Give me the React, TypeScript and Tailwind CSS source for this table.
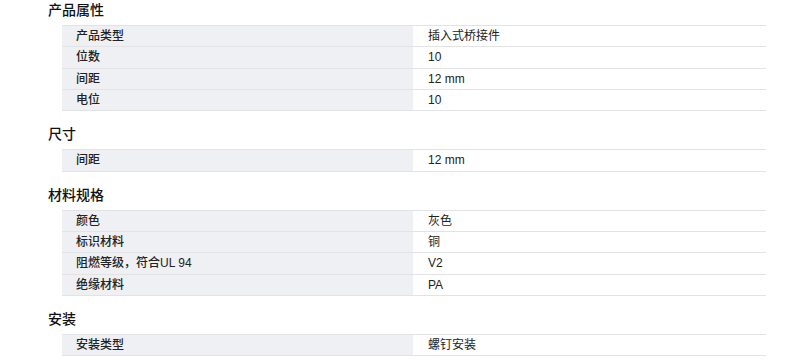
import React from "react";

interface Section {
  title: string;
  rows: [string, string][];
}

const sections: Section[] = [
  {
    title: "产品属性",
    rows: [
      ["产品类型", "插入式桥接件"],
      ["位数", "10"],
      ["间距", "12 mm"],
      ["电位", "10"],
    ],
  },
  {
    title: "尺寸",
    rows: [["间距", "12 mm"]],
  },
  {
    title: "材料规格",
    rows: [
      ["颜色", "灰色"],
      ["标识材料", "铜"],
      ["阻燃等级，符合UL 94", "V2"],
      ["绝缘材料", "PA"],
    ],
  },
  {
    title: "安装",
    rows: [["安装类型", "螺钉安装"]],
  },
];

export default function App() {
  return (
    <div
      className="w-[790px] h-[364px] bg-white pl-[48px] pr-[24px] text-[#222] overflow-hidden"
      style={{ fontFamily: '"Liberation Sans", "Noto Sans CJK SC", sans-serif' }}
    >
      {sections.map((s, i) => (
        <div key={s.title} className={i === 0 ? "" : "mt-[13px]"}>
          <h3 className="text-[14px] leading-[21px] font-medium text-[#111]">{s.title}</h3>
          <div className="ml-[14px] mt-[4px] border-t border-[#e1e3e6]">
            {s.rows.map(([label, value]) => (
              <div key={label} className="flex h-[21.33px] border-b border-[#e1e3e6] text-[12px]">
                <div className="w-[351px] bg-[#eef0f3] pl-[14px] flex items-center font-medium">{label}</div>
                <div className="flex-1 pl-[15px] flex items-center">{value}</div>
              </div>
            ))}
          </div>
        </div>
      ))}
    </div>
  );
}
